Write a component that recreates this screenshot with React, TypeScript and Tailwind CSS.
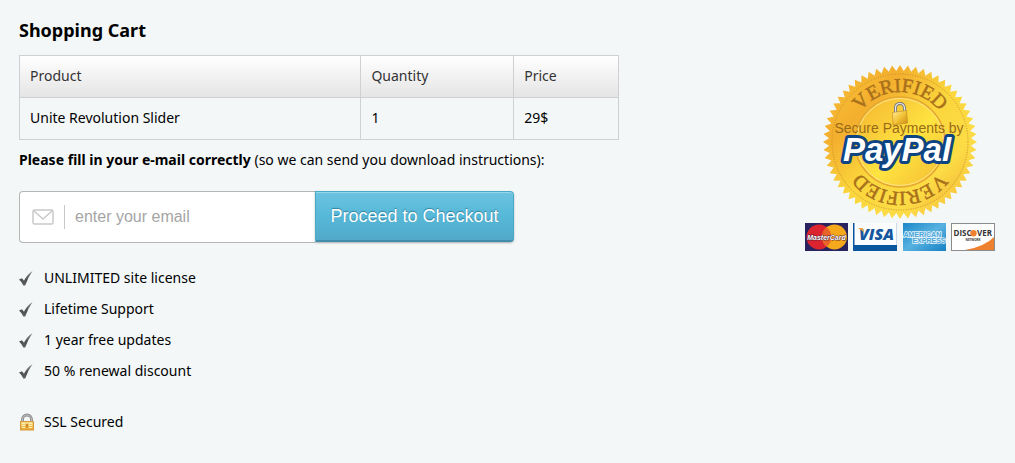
const perks = [
  'UNLIMITED site license',
  'Lifetime Support',
  '1 year free updates',
  '50 % renewal discount',
];

const items = [{ product: 'Unite Revolution Slider', quantity: 1, price: '29$' }];

// zigzag outline of the seal
const TEETH = 60;
const sealPoints = Array.from({ length: TEETH * 2 }, (_, i) => {
  const r = i % 2 === 0 ? 77 : 71;
  const a = (Math.PI * i) / TEETH;
  return `${(80 + r * Math.sin(a)).toFixed(2)},${(80 - r * Math.cos(a)).toFixed(2)}`;
}).join(' ');

function CheckIcon() {
  return (
    <svg width="14" height="16" viewBox="0 0 14 16" className="shrink-0" aria-hidden="true">
      <defs>
        <linearGradient id="check" x1="0" y1="0" x2="0" y2="1">
          <stop offset="0" stopColor="#8a8a8a" />
          <stop offset="0.6" stopColor="#505050" />
          <stop offset="1" stopColor="#606060" />
        </linearGradient>
      </defs>
      <path d="M0 9.5 L3 8.300 L5 10.800 Q8 4.500 13.500 1 Q9 7.500 6.200 15.500 L4.300 15.500 Q2.500 11.500 0 9.500Z" fill="url(#check)" />
    </svg>
  );
}

function LockIcon() {
  return (
    <svg width="16" height="18" viewBox="0 0 16 18" className="shrink-0" aria-hidden="true">
      <defs>
        <linearGradient id="lock" x1="0" y1="0" x2="0" y2="1">
          <stop offset="0" stopColor="#fbe08a" />
          <stop offset="1" stopColor="#eaa42c" />
        </linearGradient>
      </defs>
      <path d="M3.500 9 V6.500 A4.500 4.500 0 0 1 12.500 6.500 V9" fill="none" stroke="#8b8b8b" strokeWidth="2.800" />
      <path d="M3.500 9 V6.500 A4.500 4.500 0 0 1 12.500 6.500 V9" fill="none" stroke="#c4c4c4" strokeWidth="1" />
      <rect x="1.500" y="8.500" width="13" height="8.500" fill="url(#lock)" stroke="#d89a3c" />
      <path d="M3 10.500 H6 M10 10.500 H13 M3 12.500 H6 M10 12.500 H13 M3 14.500 H6 M10 14.500 H13" stroke="#fdf0b4" />
      <path d="M7 11 H9 V14.500 H7Z" fill="#c98a2a" />
    </svg>
  );
}

function MailIcon() {
  return (
    <svg width="22" height="16" viewBox="0 0 22 16" fill="none" stroke="#c9c9c9" strokeWidth="1.500" className="shrink-0" aria-hidden="true">
      <rect x="1" y="1" width="20" height="14" rx="1.500" />
      <path d="M1.500 1.500 L11 10 L20.500 1.500" />
    </svg>
  );
}

function PaypalSeal() {
  return (
    <svg width="160" height="160" viewBox="0 0 160 160" role="img" aria-label="Verified PayPal seal">
      <defs>
        <linearGradient id="gold" x1="0" y1="0" x2="1" y2="1">
          <stop offset="0" stopColor="#f8c736" />
          <stop offset="0.250" stopColor="#f3ae2e" />
          <stop offset="0.500" stopColor="#fbd63c" />
          <stop offset="0.750" stopColor="#fcdc46" />
          <stop offset="1" stopColor="#f2ac30" />
        </linearGradient>
        <linearGradient id="disc" x1="0" y1="0" x2="1" y2="1">
          <stop offset="0" stopColor="#f4b530" />
          <stop offset="0.300" stopColor="#f9cc39" />
          <stop offset="0.550" stopColor="#fee440" />
          <stop offset="1" stopColor="#f5b832" />
        </linearGradient>
        <linearGradient id="body" x1="0" y1="0" x2="1" y2="1">
          <stop offset="0" stopColor="#fff0a0" />
          <stop offset="0.500" stopColor="#f2c336" />
          <stop offset="1" stopColor="#c98714" />
        </linearGradient>
        <path id="arc" d="M30 80 A50 50 0 0 1 130 80" />
      </defs>
      <polygon points={sealPoints} fill="url(#gold)" />
      <circle cx="80" cy="80" r="69" fill="url(#gold)" />
      <circle cx="80" cy="80" r="68" fill="none" stroke="#c9902a" strokeWidth="1" strokeDasharray="1 1.500" />
      <circle cx="80" cy="80" r="45" fill="url(#disc)" stroke="#e5a830" strokeWidth="1.500" />
      <circle cx="80" cy="80" r="43.500" fill="none" stroke="#ffe58a" strokeWidth="1" />
      <g fontFamily="'Liberation Serif', serif" fontSize="20" fill="#a9701c" stroke="#a9701c" strokeWidth="0.500" textAnchor="middle">
        <text>
          <textPath href="#arc" startOffset="50%">VERIFIED</textPath>
        </text>
        <text transform="rotate(180 80 80)">
          <textPath href="#arc" startOffset="50%">VERIFIED</textPath>
        </text>
      </g>
      <path d="M75.500 51 V46 Q75.500 41.500 80 41.500 Q84 41.500 84.500 46 L85 51" fill="none" stroke="#777" strokeWidth="3" />
      <path d="M75.500 51 V46 Q75.500 41.500 80 41.500 Q84 41.500 84.500 46 L85 51" fill="none" stroke="#e8e8e8" strokeWidth="1.200" />
      <path d="M72.500 50.500 L86.500 48.500 L87.500 61 L73 63Z" fill="url(#body)" stroke="#bd8420" strokeWidth="0.600" />
      <text x="79" y="71" textAnchor="middle" fontFamily="'Liberation Sans', sans-serif" fontSize="14" fill="#9a6a16">Secure Payments by</text>
      <text x="77" y="99" textAnchor="middle" fontFamily="'Liberation Sans', sans-serif" fontSize="33" fontWeight="700" fontStyle="italic" fill="#fff" stroke="#0f4482" strokeWidth="6" strokeLinejoin="round" paintOrder="stroke">PayPal</text>
    </svg>
  );
}

function MasterCard() {
  return (
    <svg width="43" height="28" viewBox="0 0 43 28" role="img" aria-label="MasterCard">
      <rect width="43" height="28" fill="#28235f" />
      <circle cx="14" cy="14" r="12.500" fill="#dc2430" />
      <circle cx="29.500" cy="14" r="12.500" fill="#f5a81c" />
      <path d="M21.750 4.500 A12 12 0 0 1 21.750 23.500 A12 12 0 0 1 21.750 4.500Z" fill="#e8622a" />
      <text x="21.500" y="17" textAnchor="middle" fontFamily="'Liberation Sans', sans-serif" fontSize="7" fontWeight="700" fontStyle="italic" fill="#fff" stroke="#4b1c35" strokeWidth="0.800" paintOrder="stroke">MasterCard</text>
    </svg>
  );
}

function Visa() {
  return (
    <svg width="44" height="28" viewBox="0 0 44 28" role="img" aria-label="Visa">
      <rect width="44" height="28" fill="#fbfcfe" />
      <path d="M0 0 H1.500 V22 H44 V28 H0Z" fill="#0a55a0" />
      <path d="M43.500 0 V22" stroke="#ccd8e8" />
      <text x="23.500" y="17" textAnchor="middle" fontFamily="'Open Sans', sans-serif" fontSize="16" fontWeight="800" fontStyle="italic" fill="#15569f">VISA</text>
      <path d="M5.500 5 H9 Q10.500 5 10.500 7 L11 10 Q9 6.500 5.500 5.500Z" fill="#e9a23b" />
    </svg>
  );
}

function Amex() {
  return (
    <svg width="43" height="28" viewBox="0 0 43 28" role="img" aria-label="American Express">
      <defs>
        <linearGradient id="amex" x1="0" y1="0" x2="1" y2="1">
          <stop offset="0" stopColor="#1b86c8" />
          <stop offset="0.500" stopColor="#58b2e0" />
          <stop offset="1" stopColor="#1680c4" />
        </linearGradient>
      </defs>
      <rect width="43" height="28" fill="url(#amex)" />
      <g fontFamily="'Liberation Sans', sans-serif" fontSize="7" fontWeight="700" fill="#4ba5d8" stroke="#e2f3fc" strokeWidth="1.500" paintOrder="stroke">
        <text x="0.500" y="14">AMERICAN</text>
        <text x="42.500" y="20" textAnchor="end">EXPRESS</text>
      </g>
    </svg>
  );
}

function Discover() {
  return (
    <svg width="44" height="28" viewBox="0 0 44 28" role="img" aria-label="Discover Network">
      <rect x="0.500" y="0.500" width="43" height="27" fill="#fff" stroke="#8b8b8b" />
      <path d="M14 27 Q34 23.500 43 14 V27Z" fill="#ee8130" />
      <g fontFamily="'Open Sans', sans-serif" fontWeight="700" fill="#333">
        <text x="2.500" y="13" fontSize="8">DISC</text>
        <text x="26" y="13" fontSize="8">VER</text>
        <text x="22" y="18" fontSize="3" textAnchor="middle">NETWORK</text>
      </g>
      <circle cx="22.500" cy="10.200" r="3.200" fill="#ee8130" />
    </svg>
  );
}

export default function App() {
  return (
    <div className="min-h-screen bg-[#f3f7f8] font-['Noto_Sans',sans-serif] text-sm text-black">
      <div className="flex items-start justify-between gap-6 py-4 pr-5 pl-[19px]">
        <main className="min-w-0">
          <h1 className="mb-[11px] text-lg leading-7 font-bold">Shopping Cart</h1>

          <table className="w-[600px] max-w-full table-fixed border-collapse text-left">
            <thead>
              <tr className="h-[42px] bg-linear-to-b from-white to-[#e4e4e4] text-[#333]">
                <th className="w-[57%] border border-[#d0d0d2] px-2.5 pb-0.5 font-normal">Product</th>
                <th className="border border-[#d0d0d2] px-2.5 pb-0.5 font-normal">Quantity</th>
                <th className="w-[17.5%] border border-[#d0d0d2] px-2.5 pb-0.5 font-normal">Price</th>
              </tr>
            </thead>
            <tbody>
              {items.map((item) => (
                <tr key={item.product} className="h-[42px]">
                  <td className="border border-[#d0d0d2] px-2.5 pb-0.5">{item.product}</td>
                  <td className="border border-[#d0d0d2] px-2.5 pb-0.5">{item.quantity}</td>
                  <td className="border border-[#d0d0d2] px-2.5 pb-0.5">{item.price}</td>
                </tr>
              ))}
            </tbody>
          </table>

          <p className="mt-2.5 mb-[21px]">
            <label htmlFor="email" className="font-bold">Please fill in your e-mail correctly</label>{' '}
            (so we can send you download instructions):
          </p>

          <form className="flex max-w-[495px] font-['Liberation_Sans',sans-serif]" onSubmit={(e) => e.preventDefault()}>
            <div className="flex h-[52px] min-w-0 flex-1 items-center rounded-l border border-r-0 border-[#b5b5b5] bg-white pl-3">
              <MailIcon />
              <span className="mx-2.5 h-6 w-px bg-[#c8c8c8]" />
              <input
                id="email"
                type="email"
                placeholder="enter your email"
                className="min-w-0 flex-1 bg-transparent text-base outline-none placeholder:text-[#a5a5a5]"
              />
            </div>
            <button
              type="submit"
              className="h-[51px] w-[199px] rounded-r border border-[#4ba9c8] border-b-2 border-b-[#3f8dab] bg-linear-to-b from-[#6bc4e0] via-[#57b8d8] to-[#51a9c8] text-lg whitespace-nowrap text-white shadow-[inset_0_1px_0_#94d6ea,0_1px_2px_rgba(0,0,0,0.3)] text-shadow-[0_-1px_1px_rgba(0,70,100,0.5)]"
            >
              Proceed to Checkout
            </button>
          </form>

          <ul className="mt-[19px]">
            {perks.map((perk) => (
              <li key={perk} className="flex h-[31px] items-center gap-[11px]">
                <CheckIcon />
                {perk}
              </li>
            ))}
          </ul>

          <div className="mt-5 flex h-[31px] items-center gap-[9px]">
            <LockIcon />
            SSL Secured
          </div>
        </main>

        <aside className="mt-[46px] flex w-[190px] shrink-0 flex-col items-center gap-px">
          <PaypalSeal />
          <div className="flex w-full justify-between">
            <MasterCard />
            <Visa />
            <Amex />
            <Discover />
          </div>
        </aside>
      </div>
    </div>
  );
}
